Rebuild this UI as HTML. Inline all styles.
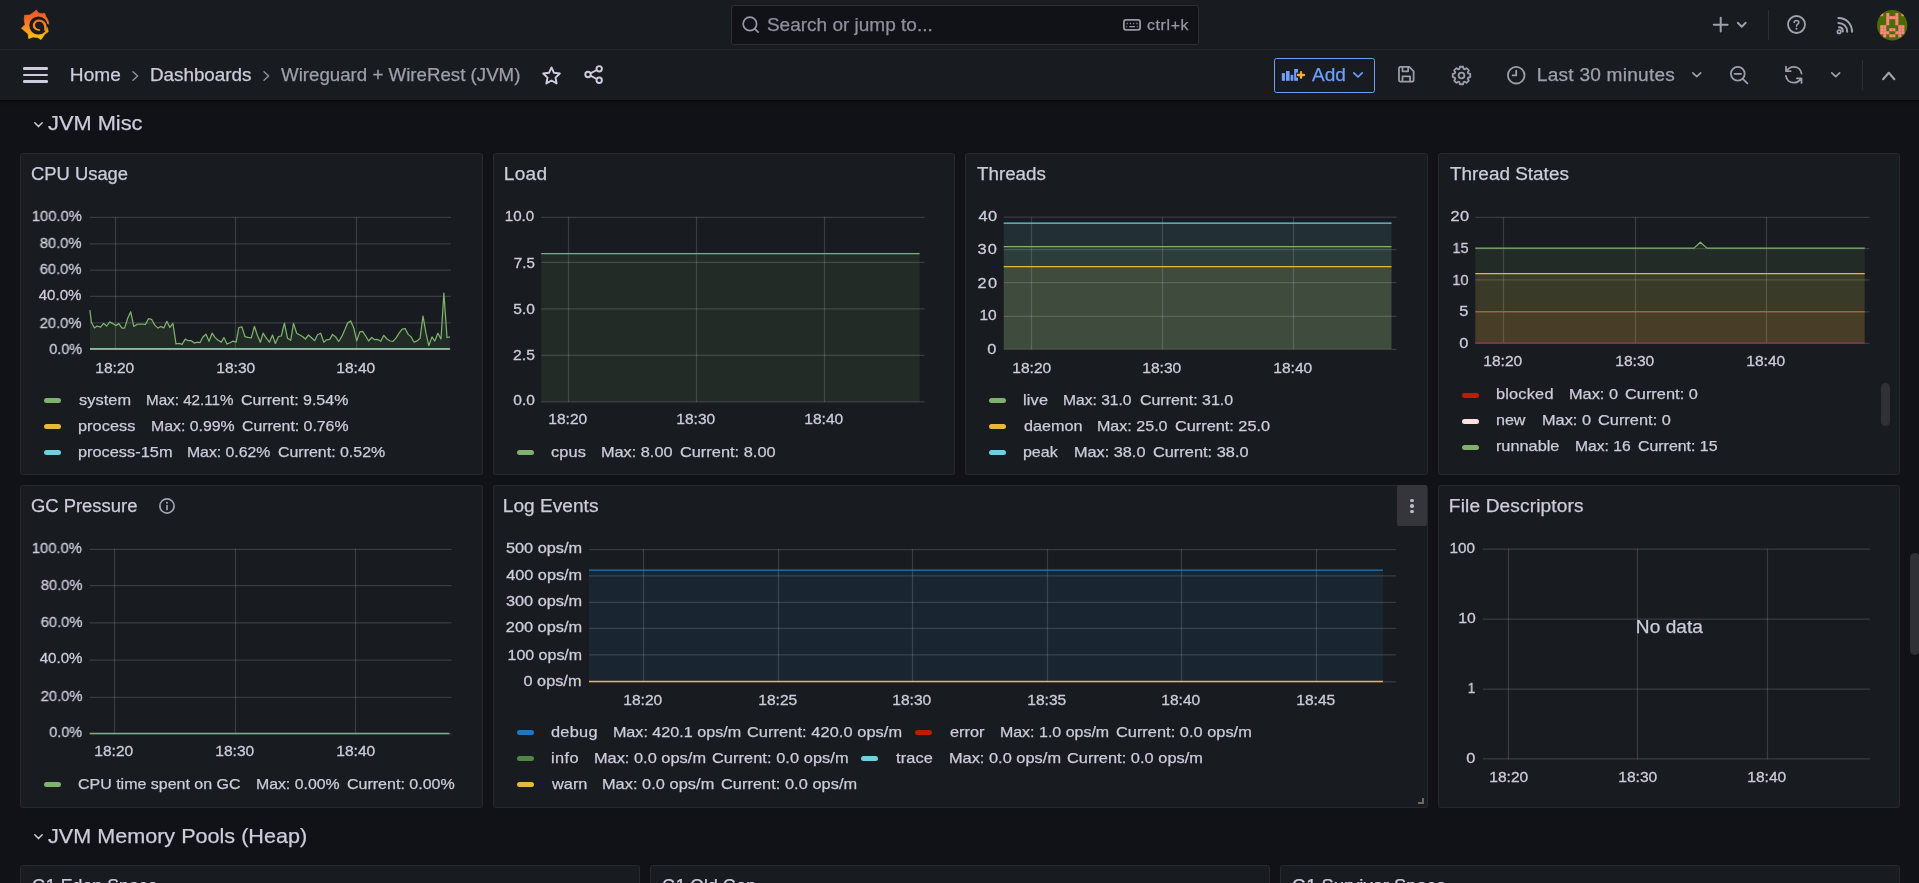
<!DOCTYPE html>
<html><head><meta charset="utf-8"><title>Wireguard + WireRest (JVM) - Dashboards - Grafana</title>
<style>
html,body{margin:0;padding:0;background:#111217;}
body{width:1919px;height:883px;overflow:hidden;position:relative;font-family:"Liberation Sans",sans-serif;}
.t{position:absolute;white-space:nowrap;font-family:"Liberation Sans",sans-serif;-webkit-text-stroke-width:0.25px;}
svg{overflow:visible}
</style></head><body>
<div style="position:absolute;left:0px;top:0px;width:1919px;height:49px;background:#181b1f;"></div>
<div style="position:absolute;left:0px;top:49px;width:1919px;height:1px;background:#25272c;"></div>
<div style="position:absolute;left:0px;top:50px;width:1919px;height:50px;background:#181b1f;"></div>
<div style="position:absolute;left:0px;top:100px;width:1919px;height:9px;background:linear-gradient(rgba(5,6,8,0.75),rgba(10,11,14,0.35) 30%,rgba(17,18,23,0));"></div>
<svg style="position:absolute;left:15px;top:5px;" width="40" height="40" viewBox="0 0 883 883"><defs><linearGradient id="gl" gradientUnits="userSpaceOnUse" x1="0" y1="105" x2="0" y2="772"><stop offset="0" stop-color="#f15a29"/><stop offset="0.3" stop-color="#f26a25"/><stop offset="0.62" stop-color="#f7941e"/><stop offset="1" stop-color="#fcca0b"/></linearGradient></defs>
<path fill="url(#gl)" stroke="url(#gl)" stroke-width="14" stroke-linejoin="round" d="M470 112 L520 176 L600 194 L655 180 L686 264 C726 312 746 370 744 428 L712 482 L736 588 L666 636 L574 764 L500 718 L400 708 L302 740 L290 638 L142 515 L222 430 L204 330 L211 228 L330 220 L420 156 Z"/>
<circle cx="516" cy="452" r="200" fill="#181b1f"/>
<path d="M703 408 L762 440 L722 490 L696 476 Z" fill="#181b1f"/>
<path fill="url(#gl)" d="M552 566 C470 582 396 530 393 460 C391 380 455 322 527 322 C622 322 694 392 698 474 L706 566 L648 566 C652 500 640 440 612 404 C588 374 552 368 522 368 C472 368 440 410 443 455 C446 500 492 540 550 538 Z"/></svg>
<div style="position:absolute;left:22.5px;top:67.4px;width:25px;height:2.6px;background:#ccccdc;border-radius:1.3px;"></div>
<div style="position:absolute;left:22.5px;top:73.7px;width:25px;height:2.6px;background:#ccccdc;border-radius:1.3px;"></div>
<div style="position:absolute;left:22.5px;top:80.0px;width:25px;height:2.6px;background:#ccccdc;border-radius:1.3px;"></div>
<div class="t" style="left:69.77px;top:65.00px;font-size:17.5px;line-height:20px;color:#ccccdc;letter-spacing:0.009px;transform:scaleX(1.0900);transform-origin:1.44px 50%;will-change:transform;">Home</div>
<div class="t" style="left:149.76px;top:65.00px;font-size:17.5px;line-height:20px;color:#ccccdc;letter-spacing:0.000px;transform:scaleX(1.0770);transform-origin:1.44px 50%;will-change:transform;">Dashboards</div>
<div class="t" style="left:281.33px;top:65.00px;font-size:17.5px;line-height:20px;color:#9d9eab;letter-spacing:0.000px;transform:scaleX(1.0682);transform-origin:0.07px 50%;will-change:transform;">Wireguard + WireRest (JVM)</div>
<svg style="position:absolute;left:132px;top:71px;" width="7" height="10" viewBox="0 0 7 10"><path d="M1 0.7 L5.6 5 L1 9.3" fill="none" stroke="#8e8f9b" stroke-width="1.5" stroke-linecap="round" stroke-linejoin="round"/></svg>
<svg style="position:absolute;left:262.8px;top:71px;" width="7" height="10" viewBox="0 0 7 10"><path d="M1 0.7 L5.6 5 L1 9.3" fill="none" stroke="#8e8f9b" stroke-width="1.5" stroke-linecap="round" stroke-linejoin="round"/></svg>
<svg style="position:absolute;left:542px;top:65.6px;" width="19" height="19" viewBox="0 0 19 19"><path d="M9.5 1.4 L12 6.8 L17.8 7.5 L13.5 11.6 L14.6 17.4 L9.5 14.5 L4.4 17.4 L5.5 11.6 L1.2 7.5 L7 6.8 Z" fill="none" stroke="#ccccdc" stroke-width="1.95" stroke-linejoin="round"/></svg>
<svg style="position:absolute;left:583.9px;top:65.1px;" width="19.5" height="19" viewBox="0 0 19.5 19"><g fill="none" stroke="#ccccdc" stroke-width="1.95"><circle cx="15.2" cy="3.8" r="2.7"/><circle cx="4" cy="9.5" r="2.7"/><circle cx="15.2" cy="15.2" r="2.7"/><path d="M6.4 8.3 L12.8 5 M6.4 10.7 L12.8 14"/></g></svg>
<div style="position:absolute;left:731px;top:5px;width:466px;height:38px;background:#111217;border:1px solid #2c2e34;border-radius:3px;"></div>
<svg style="position:absolute;left:742.3px;top:16.2px;" width="18" height="18" viewBox="0 0 18 18"><g fill="none" stroke="#9798a6" stroke-width="1.7" stroke-linecap="round"><circle cx="7.9" cy="7.9" r="6.7"/><path d="M12.8 12.8 L16.1 16.1"/></g></svg>
<div class="t" style="left:767.11px;top:15.00px;font-size:17.5px;line-height:20px;color:#8e8f9c;letter-spacing:0.000px;transform:scaleX(1.0856);transform-origin:0.79px 50%;will-change:transform;">Search or jump to...</div>
<svg style="position:absolute;left:1122.8px;top:19px;" width="18.2" height="11.8" viewBox="0 0 18.2 11.8"><g fill="none" stroke="#9798a6"><rect x="0.9" y="0.9" width="16.2" height="9.9" rx="2" stroke-width="1.8"/><path d="M3.7 4.5h1.1M6.9 4.5h1.1M10.2 4.5h1.1M13.4 4.5h1.1M3.3 7.65h0.9M6.3 7.65h5.7M13.8 7.65h0.9" stroke-width="1.3"/></g></svg>
<div class="t" style="left:1146.69px;top:17.00px;font-size:14.5px;line-height:16px;color:#9798a6;letter-spacing:0.611px;transform:scaleX(1.0900);transform-origin:0.61px 50%;will-change:transform;">ctrl+k</div>
<svg style="position:absolute;left:1713px;top:17px;" width="15.4" height="15.4" viewBox="0 0 15.4 15.4"><path d="M7.7 0.8V14.6M0.8 7.7H14.6" stroke="#a1a2b0" stroke-width="2" stroke-linecap="round"/></svg>
<svg style="position:absolute;left:1737.3px;top:22px;" width="9.5" height="5.5" viewBox="0 0 9.5 5.5"><path d="M0.8 0.8 L4.75 4.7 L8.7 0.8" fill="none" stroke="#a1a2b0" stroke-width="1.9" stroke-linecap="round" stroke-linejoin="round"/></svg>
<div style="position:absolute;left:1768px;top:10px;width:1px;height:30px;background:#2c2e34;"></div>
<svg style="position:absolute;left:1787px;top:15px;" width="19" height="19" viewBox="0 0 19 19"><circle cx="9.5" cy="9.5" r="8.5" fill="none" stroke="#a1a2b0" stroke-width="1.8"/><path d="M7.2 7.5 C7.2 4.9 11.8 4.9 11.8 7.5 C11.8 9.2 9.5 9.3 9.5 11.1" fill="none" stroke="#a1a2b0" stroke-width="1.6" stroke-linecap="round"/><circle cx="9.5" cy="13.7" r="1" fill="#a1a2b0"/></svg>
<svg style="position:absolute;left:1836.4px;top:16.5px;" width="17" height="18" viewBox="0 0 17 18"><g fill="none" stroke="#a1a2b0" stroke-width="2" stroke-linecap="round"><path d="M2.4 1 C10.2 1 16 6.8 16 14.8"/><path d="M2.4 5.9 C7.6 5.9 11.2 9.6 11.2 14.8"/><path d="M3 10.3 C5.4 10.3 6.8 12.2 6.8 14.4"/><circle cx="3.1" cy="14.7" r="1.7" stroke-width="1.7"/></g></svg>
<svg style="position:absolute;left:1876.8px;top:9.8px;" width="30.4" height="30.4" viewBox="0 0 30.4 30.4"><defs><clipPath id="avc"><circle cx="15.2" cy="15.2" r="15.2"/></clipPath></defs><g clip-path="url(#avc)"><rect width="31" height="31" fill="#4b6a08"/><rect x="3.20" y="3.10" width="3.07" height="3.07" fill="#ff877d"/><rect x="9.24" y="3.10" width="3.07" height="3.07" fill="#ff877d"/><rect x="18.30" y="3.10" width="3.07" height="3.07" fill="#ff877d"/><rect x="24.34" y="3.10" width="3.07" height="3.07" fill="#ff877d"/><rect x="9.24" y="6.12" width="3.07" height="3.07" fill="#ff877d"/><rect x="12.26" y="6.12" width="3.07" height="3.07" fill="#ff877d"/><rect x="15.28" y="6.12" width="3.07" height="3.07" fill="#ff877d"/><rect x="18.30" y="6.12" width="3.07" height="3.07" fill="#ff877d"/><rect x="9.24" y="9.14" width="3.07" height="3.07" fill="#ff877d"/><rect x="18.30" y="9.14" width="3.07" height="3.07" fill="#ff877d"/><rect x="9.24" y="12.16" width="3.07" height="3.07" fill="#ff877d"/><rect x="18.30" y="12.16" width="3.07" height="3.07" fill="#ff877d"/><rect x="3.20" y="15.18" width="3.07" height="3.07" fill="#ff877d"/><rect x="6.22" y="15.18" width="3.07" height="3.07" fill="#ff877d"/><rect x="21.32" y="15.18" width="3.07" height="3.07" fill="#ff877d"/><rect x="24.34" y="15.18" width="3.07" height="3.07" fill="#ff877d"/><rect x="3.20" y="18.20" width="3.07" height="3.07" fill="#ff877d"/><rect x="6.22" y="18.20" width="3.07" height="3.07" fill="#ff877d"/><rect x="12.26" y="18.20" width="3.07" height="3.07" fill="#ff877d"/><rect x="15.28" y="18.20" width="3.07" height="3.07" fill="#ff877d"/><rect x="21.32" y="18.20" width="3.07" height="3.07" fill="#ff877d"/><rect x="24.34" y="18.20" width="3.07" height="3.07" fill="#ff877d"/><rect x="3.20" y="21.22" width="3.07" height="3.07" fill="#ff877d"/><rect x="6.22" y="21.22" width="3.07" height="3.07" fill="#ff877d"/><rect x="9.24" y="21.22" width="3.07" height="3.07" fill="#ff877d"/><rect x="18.30" y="21.22" width="3.07" height="3.07" fill="#ff877d"/><rect x="21.32" y="21.22" width="3.07" height="3.07" fill="#ff877d"/><rect x="24.34" y="21.22" width="3.07" height="3.07" fill="#ff877d"/><rect x="6.22" y="24.24" width="3.07" height="3.07" fill="#ff877d"/><rect x="12.26" y="24.24" width="3.07" height="3.07" fill="#ff877d"/><rect x="15.28" y="24.24" width="3.07" height="3.07" fill="#ff877d"/><rect x="21.32" y="24.24" width="3.07" height="3.07" fill="#ff877d"/></g></svg>
<div style="position:absolute;left:1274px;top:57.9px;width:98.7px;height:32.7px;border:1.25px solid #6e9fff;border-radius:2.5px;"></div>
<svg style="position:absolute;left:0;top:0" width="1919" height="883" viewBox="0 0 1919 883"><defs><linearGradient id="pg" x1="0" y1="0" x2="0" y2="1"><stop offset="0" stop-color="#ff9830"/><stop offset="1" stop-color="#fbc230"/></linearGradient></defs><g fill="#6e9fff"><rect x="1281.8" y="73.1" width="3.2" height="7.7"/><rect x="1286" y="71" width="3.6" height="9.8"/><rect x="1290.6" y="74.8" width="2.7" height="6"/><rect x="1294.2" y="69" width="3.8" height="11.8"/></g><rect x="1296.2" y="72.6" width="3" height="5" fill="#181b1f"/><path d="M1301 72.2V77.7M1297.9 75H1304" stroke="url(#pg)" stroke-width="2.3" stroke-linecap="round"/></svg>
<div class="t" style="left:1312.37px;top:65.00px;font-size:17.5px;line-height:20px;color:#6e9fff;letter-spacing:0.011px;transform:scaleX(1.0900);transform-origin:0.04px 50%;will-change:transform;">Add</div>
<svg style="position:absolute;left:1352.6px;top:71.8px;" width="10" height="5.8" viewBox="0 0 10 5.8"><path d="M0.8 0.8 L5.0 5.0 L9.2 0.8" fill="none" stroke="#6e9fff" stroke-width="1.7" stroke-linecap="round" stroke-linejoin="round"/></svg>
<svg style="position:absolute;left:1398.4px;top:66.1px;" width="16.6" height="16.6" viewBox="0 0 17 17"><g fill="none" stroke="#9d9eab" stroke-width="1.8" stroke-linejoin="round"><path d="M1 2.4 C1 1.6 1.6 1 2.4 1 H11.6 L16 5.4 V14.6 C16 15.4 15.4 16 14.6 16 H2.4 C1.6 16 1 15.4 1 14.6 Z"/><path d="M4.6 1 V5.4 H10.4 V1"/><path d="M4.6 16 V10.6 H12.4 V16"/></g></svg>
<svg style="position:absolute;left:1452px;top:65.5px;" width="19" height="19" viewBox="0 0 19 19"><path d="M7.91 0.74 L11.09 0.74 L11.57 2.81 L12.77 3.31 L14.56 2.18 L16.82 4.44 L15.69 6.23 L16.19 7.43 L18.26 7.91 L18.26 11.09 L16.19 11.57 L15.69 12.77 L16.82 14.56 L14.56 16.82 L12.77 15.69 L11.57 16.19 L11.09 18.26 L7.91 18.26 L7.43 16.19 L6.23 15.69 L4.44 16.82 L2.18 14.56 L3.31 12.77 L2.81 11.57 L0.74 11.09 L0.74 7.91 L2.81 7.43 L3.31 6.23 L2.18 4.44 L4.44 2.18 L6.23 3.31 L7.43 2.81 Z" fill="none" stroke="#9d9eab" stroke-width="1.8" stroke-linejoin="round"/><circle cx="9.5" cy="9.5" r="2.9" fill="none" stroke="#9d9eab" stroke-width="1.8"/></svg>
<svg style="position:absolute;left:1506.8px;top:66px;" width="18.4" height="18.4" viewBox="0 0 18.4 18.4"><circle cx="9.2" cy="9.2" r="8.3" fill="none" stroke="#9d9eab" stroke-width="1.8"/><path d="M9.2 4.6V9.4H5.6" fill="none" stroke="#9d9eab" stroke-width="1.8" stroke-linecap="round" stroke-linejoin="round"/></svg>
<div class="t" style="left:1536.87px;top:65.00px;font-size:17.5px;line-height:20px;color:#9fa0ae;letter-spacing:0.215px;transform:scaleX(1.0900);transform-origin:1.44px 50%;will-change:transform;">Last 30 minutes</div>
<svg style="position:absolute;left:1692.4px;top:71.9px;" width="9.5" height="5.5" viewBox="0 0 9.5 5.5"><path d="M0.8 0.8 L4.75 4.7 L8.7 0.8" fill="none" stroke="#9d9eab" stroke-width="1.7" stroke-linecap="round" stroke-linejoin="round"/></svg>
<svg style="position:absolute;left:1730px;top:66px;" width="18.5" height="18.5" viewBox="0 0 18.5 18.5"><g fill="none" stroke="#9d9eab" stroke-width="1.8" stroke-linecap="round"><circle cx="7.8" cy="7.8" r="6.9"/><path d="M12.8 12.8 L17.4 17.4 M4.6 7.8H11"/></g></svg>
<svg style="position:absolute;left:1784px;top:65px;" width="19.5" height="19.5" viewBox="0 0 19.5 19.5"><g fill="none" stroke="#9d9eab" stroke-width="1.8" stroke-linecap="round" stroke-linejoin="round"><path d="M17.6 8.6 C17 4.6 13.8 1.8 9.8 1.8 C6.6 1.8 4 3.4 2.6 6 M2 1.6 V6.2 H6.6"/><path d="M1.9 10.9 C2.5 14.9 5.7 17.7 9.7 17.7 C12.9 17.7 15.5 16.1 16.9 13.5 M17.5 17.9 V13.3 H12.9"/></g></svg>
<svg style="position:absolute;left:1831.0px;top:71.9px;" width="9.5" height="5.5" viewBox="0 0 9.5 5.5"><path d="M0.8 0.8 L4.75 4.7 L8.7 0.8" fill="none" stroke="#9d9eab" stroke-width="1.7" stroke-linecap="round" stroke-linejoin="round"/></svg>
<div style="position:absolute;left:1862px;top:60px;width:1px;height:30px;background:#2c2e34;"></div>
<svg style="position:absolute;left:1882.0px;top:70.7px;" width="13.5" height="9.5" viewBox="0 0 13.5 9.5"><path d="M1.1 8.2 L6.75 1.8 L12.4 8.2" fill="none" stroke="#a2a3b0" stroke-width="2.1" stroke-linecap="round" stroke-linejoin="round"/></svg>
<svg style="position:absolute;left:33.6px;top:122.2px;" width="9" height="5.4" viewBox="0 0 9 5.4"><path d="M0.8 0.8 L4.5 4.6000000000000005 L8.2 0.8" fill="none" stroke="#ccccdc" stroke-width="1.5" stroke-linecap="round" stroke-linejoin="round"/></svg>
<div class="t" style="left:47.98px;top:111.00px;font-size:21px;line-height:23px;color:#ccccdc;letter-spacing:0.000px;transform:scaleX(1.0385);transform-origin:0.32px 50%;">JVM Misc</div>
<svg style="position:absolute;left:33.8px;top:834.4px;" width="9" height="5.4" viewBox="0 0 9 5.4"><path d="M0.8 0.8 L4.5 4.6000000000000005 L8.2 0.8" fill="none" stroke="#ccccdc" stroke-width="1.5" stroke-linecap="round" stroke-linejoin="round"/></svg>
<div class="t" style="left:48.19px;top:824.00px;font-size:21px;line-height:23px;color:#ccccdc;letter-spacing:0.000px;transform:scaleX(1.0282);transform-origin:0.32px 50%;">JVM Memory Pools (Heap)</div>
<div style="position:absolute;left:20px;top:153px;width:461px;height:320px;background:#181b1f;border:1px solid #26282e;border-radius:2.5px;"></div>
<div class="t" style="left:31.12px;top:164.00px;font-size:17.5px;line-height:20px;color:#ccccdc;letter-spacing:0.000px;transform:scaleX(1.0512);transform-origin:0.88px 50%;">CPU Usage</div>
<div style="position:absolute;left:493px;top:153px;width:460px;height:320px;background:#181b1f;border:1px solid #26282e;border-radius:2.5px;"></div>
<div class="t" style="left:503.76px;top:164.00px;font-size:17.5px;line-height:20px;color:#ccccdc;letter-spacing:0.233px;transform:scaleX(1.0900);transform-origin:1.44px 50%;">Load</div>
<div style="position:absolute;left:965px;top:153px;width:461px;height:320px;background:#181b1f;border:1px solid #26282e;border-radius:2.5px;"></div>
<div class="t" style="left:976.91px;top:164.00px;font-size:17.5px;line-height:20px;color:#ccccdc;letter-spacing:0.000px;transform:scaleX(1.0732);transform-origin:0.39px 50%;">Threads</div>
<div style="position:absolute;left:1438px;top:153px;width:460px;height:320px;background:#181b1f;border:1px solid #26282e;border-radius:2.5px;"></div>
<div class="t" style="left:1449.62px;top:164.00px;font-size:17.5px;line-height:20px;color:#ccccdc;letter-spacing:0.000px;transform:scaleX(1.0817);transform-origin:0.39px 50%;">Thread States</div>
<div style="position:absolute;left:20px;top:485px;width:461px;height:321px;background:#181b1f;border:1px solid #26282e;border-radius:2.5px;"></div>
<div class="t" style="left:31.23px;top:496.00px;font-size:17.5px;line-height:20px;color:#ccccdc;letter-spacing:-0.000px;transform:scaleX(1.0524);transform-origin:0.88px 50%;">GC Pressure</div>
<div style="position:absolute;left:493px;top:485px;width:933px;height:321px;background:#181b1f;border:1px solid #26282e;border-radius:2.5px;"></div>
<div class="t" style="left:503.46px;top:496.00px;font-size:17.5px;line-height:20px;color:#ccccdc;letter-spacing:0.012px;transform:scaleX(1.0900);transform-origin:1.44px 50%;">Log Events</div>
<div style="position:absolute;left:1438px;top:485px;width:460px;height:321px;background:#181b1f;border:1px solid #26282e;border-radius:2.5px;"></div>
<div class="t" style="left:1448.57px;top:496.00px;font-size:17.5px;line-height:20px;color:#ccccdc;letter-spacing:0.138px;transform:scaleX(1.0900);transform-origin:1.44px 50%;">File Descriptors</div>
<div style="position:absolute;left:20px;top:865px;width:618px;height:38px;background:#181b1f;border:1px solid #26282e;border-radius:2.5px;"></div>
<div class="t" style="left:31.62px;top:876.00px;font-size:17.5px;line-height:20px;color:#ccccdc;letter-spacing:0.000px;transform:scaleX(1.0172);transform-origin:0.88px 50%;">G1 Eden Space</div>
<div style="position:absolute;left:650px;top:865px;width:618px;height:38px;background:#181b1f;border:1px solid #26282e;border-radius:2.5px;"></div>
<div class="t" style="left:661.52px;top:876.00px;font-size:17.5px;line-height:20px;color:#ccccdc;letter-spacing:0.000px;transform:scaleX(1.0056);transform-origin:0.88px 50%;">G1 Old Gen</div>
<div style="position:absolute;left:1280px;top:865px;width:618px;height:38px;background:#181b1f;border:1px solid #26282e;border-radius:2.5px;"></div>
<div class="t" style="left:1291.62px;top:876.00px;font-size:17.5px;line-height:20px;color:#ccccdc;letter-spacing:0.000px;transform:scaleX(1.0502);transform-origin:0.88px 50%;">G1 Survivor Space</div>
<svg style="position:absolute;left:0;top:0" width="1919" height="883" viewBox="0 0 1919 883"><g stroke="#f0faff" stroke-opacity="0.15" stroke-width="1.25"><line x1="90" x2="451" y1="217.45" y2="217.45"/><line x1="90" x2="451" y1="243.75" y2="243.75"/><line x1="90" x2="451" y1="270.05" y2="270.05"/><line x1="90" x2="451" y1="296.35" y2="296.35"/><line x1="90" x2="451" y1="322.75" y2="322.75"/><line x1="90" x2="451" y1="349.05" y2="349.05"/><line x1="115.5" x2="115.5" y1="216.90" y2="349.50"/><line x1="235.5" x2="235.5" y1="216.90" y2="349.50"/><line x1="356.5" x2="356.5" y1="216.90" y2="349.50"/></g><path d="M89.9 310.1 L91.4 322.3 L94.4 327.9 L97.1 326.0 L100.5 327.2 L103.6 323.4 L106.7 326.0 L109.7 321.9 L112.8 323.6 L115.8 325.6 L118.9 323.6 L122.0 328.1 L124.6 328.1 L127.7 318.3 L130.7 311.7 L133.8 326.4 L136.8 324.4 L140.3 324.0 L145.4 324.4 L148.5 318.7 L151.5 319.3 L155.0 325.4 L158.1 328.1 L160.7 326.4 L163.8 327.9 L166.8 321.3 L169.9 327.4 L172.9 323.4 L176.0 343.8 L179.1 343.4 L182.1 344.4 L185.2 339.1 L188.2 340.7 L191.3 340.7 L194.3 343.1 L197.4 342.1 L199.9 342.7 L202.9 337.0 L206.0 334.2 L209.0 341.3 L212.1 333.2 L215.1 337.6 L218.2 340.3 L221.3 342.1 L223.9 337.6 L227.0 344.0 L230.0 342.7 L233.1 341.1 L236.2 342.1 L238.8 327.5 L241.9 326.9 L245.0 336.7 L248.1 337.3 L251.3 337.8 L254.4 326.3 L257.3 335.0 L260.3 342.2 L263.1 333.2 L266.3 338.2 L269.4 342.2 L272.5 335.0 L275.4 343.5 L278.5 336.5 L281.3 336.0 L284.4 323.1 L287.5 338.2 L290.7 340.3 L293.5 323.4 L296.7 333.2 L299.8 335.0 L302.5 336.5 L305.4 339.0 L308.5 335.0 L311.5 337.8 L314.7 340.7 L317.5 334.7 L320.7 333.2 L323.8 342.2 L326.5 339.8 L329.7 339.4 L332.6 334.4 L335.7 336.9 L338.6 341.5 L341.6 336.9 L344.7 330.0 L347.6 322.9 L350.7 321.0 L353.8 328.1 L356.7 340.9 L359.8 331.9 L362.6 331.3 L365.7 336.0 L368.6 341.0 L371.7 337.5 L374.7 339.7 L377.8 339.4 L380.7 341.3 L383.8 335.4 L387.0 339.0 L390.1 341.0 L393.0 341.3 L396.1 337.8 L399.1 333.2 L402.2 329.1 L405.1 328.5 L408.2 334.4 L411.1 336.9 L414.1 342.2 L417.2 340.9 L420.1 338.2 L423.0 316.0 L426.0 333.2 L428.8 345.7 L432.0 336.9 L434.7 341.0 L437.9 333.2 L441.0 339.0 L443.9 293.1 L447.0 337.5 L449.9 336.9 L449.9 348.9 L89.9 348.9 Z" fill="#7eb26d" fill-opacity="0.115"/><path d="M89.9 310.1 L91.4 322.3 L94.4 327.9 L97.1 326.0 L100.5 327.2 L103.6 323.4 L106.7 326.0 L109.7 321.9 L112.8 323.6 L115.8 325.6 L118.9 323.6 L122.0 328.1 L124.6 328.1 L127.7 318.3 L130.7 311.7 L133.8 326.4 L136.8 324.4 L140.3 324.0 L145.4 324.4 L148.5 318.7 L151.5 319.3 L155.0 325.4 L158.1 328.1 L160.7 326.4 L163.8 327.9 L166.8 321.3 L169.9 327.4 L172.9 323.4 L176.0 343.8 L179.1 343.4 L182.1 344.4 L185.2 339.1 L188.2 340.7 L191.3 340.7 L194.3 343.1 L197.4 342.1 L199.9 342.7 L202.9 337.0 L206.0 334.2 L209.0 341.3 L212.1 333.2 L215.1 337.6 L218.2 340.3 L221.3 342.1 L223.9 337.6 L227.0 344.0 L230.0 342.7 L233.1 341.1 L236.2 342.1 L238.8 327.5 L241.9 326.9 L245.0 336.7 L248.1 337.3 L251.3 337.8 L254.4 326.3 L257.3 335.0 L260.3 342.2 L263.1 333.2 L266.3 338.2 L269.4 342.2 L272.5 335.0 L275.4 343.5 L278.5 336.5 L281.3 336.0 L284.4 323.1 L287.5 338.2 L290.7 340.3 L293.5 323.4 L296.7 333.2 L299.8 335.0 L302.5 336.5 L305.4 339.0 L308.5 335.0 L311.5 337.8 L314.7 340.7 L317.5 334.7 L320.7 333.2 L323.8 342.2 L326.5 339.8 L329.7 339.4 L332.6 334.4 L335.7 336.9 L338.6 341.5 L341.6 336.9 L344.7 330.0 L347.6 322.9 L350.7 321.0 L353.8 328.1 L356.7 340.9 L359.8 331.9 L362.6 331.3 L365.7 336.0 L368.6 341.0 L371.7 337.5 L374.7 339.7 L377.8 339.4 L380.7 341.3 L383.8 335.4 L387.0 339.0 L390.1 341.0 L393.0 341.3 L396.1 337.8 L399.1 333.2 L402.2 329.1 L405.1 328.5 L408.2 334.4 L411.1 336.9 L414.1 342.2 L417.2 340.9 L420.1 338.2 L423.0 316.0 L426.0 333.2 L428.8 345.7 L432.0 336.9 L434.7 341.0 L437.9 333.2 L441.0 339.0 L443.9 293.1 L447.0 337.5 L449.9 336.9" fill="none" stroke="#7eb26d" stroke-width="1.25" stroke-linejoin="round"/><path d="M90 348.9 H449.8" stroke="#eab839" stroke-width="1.3"/><path d="M90 349 H449.8" stroke="#6ed0e0" stroke-opacity="0.8" stroke-width="1.4"/></svg>
<div class="t" style="left:31.06px;top:207.00px;font-size:15px;line-height:17px;color:#ccccdc;letter-spacing:0.000px;will-change:transform;-webkit-text-stroke-width:0.3px;transform:scaleX(0.9837);transform-origin:50.34px 50%;">100.0%</div>
<div class="t" style="left:39.40px;top:234.00px;font-size:15px;line-height:17px;color:#ccccdc;letter-spacing:0.000px;will-change:transform;-webkit-text-stroke-width:0.3px;transform:scaleX(0.9817);transform-origin:42.00px 50%;">80.0%</div>
<div class="t" style="left:39.40px;top:260.00px;font-size:15px;line-height:17px;color:#ccccdc;letter-spacing:0.000px;will-change:transform;-webkit-text-stroke-width:0.3px;transform:scaleX(0.9842);transform-origin:42.00px 50%;">60.0%</div>
<div class="t" style="left:39.40px;top:286.00px;font-size:15px;line-height:17px;color:#ccccdc;letter-spacing:0.000px;will-change:transform;-webkit-text-stroke-width:0.3px;transform:scaleX(1.0079);transform-origin:42.00px 50%;">40.0%</div>
<div class="t" style="left:39.40px;top:314.00px;font-size:15px;line-height:17px;color:#ccccdc;letter-spacing:0.000px;will-change:transform;-webkit-text-stroke-width:0.3px;transform:scaleX(0.9842);transform-origin:42.00px 50%;">20.0%</div>
<div class="t" style="left:47.74px;top:340.00px;font-size:15px;line-height:17px;color:#ccccdc;letter-spacing:0.000px;will-change:transform;-webkit-text-stroke-width:0.3px;transform:scaleX(0.9615);transform-origin:33.66px 50%;">0.0%</div>
<div class="t" style="left:96.35px;top:359.00px;font-size:15px;line-height:17px;color:#ccccdc;letter-spacing:0.000px;will-change:transform;-webkit-text-stroke-width:0.3px;transform:scaleX(1.0385);transform-origin:19.05px 50%;">18:20</div>
<div class="t" style="left:216.65px;top:359.00px;font-size:15px;line-height:17px;color:#ccccdc;letter-spacing:0.000px;will-change:transform;-webkit-text-stroke-width:0.3px;transform:scaleX(1.0385);transform-origin:19.05px 50%;">18:30</div>
<div class="t" style="left:336.95px;top:359.00px;font-size:15px;line-height:17px;color:#ccccdc;letter-spacing:0.000px;will-change:transform;-webkit-text-stroke-width:0.3px;transform:scaleX(1.0385);transform-origin:19.05px 50%;">18:40</div>
<div style="position:absolute;left:44px;top:398px;width:17.3px;height:5px;background:#7eb26d;border-radius:2.5px;"></div>
<div class="t" style="left:78.80px;top:391.00px;font-size:15px;line-height:17px;color:#ccccdc;letter-spacing:0.078px;transform:scaleX(1.0900);transform-origin:0.41px 50%;">system</div>
<div class="t" style="left:146.07px;top:391.00px;font-size:15px;line-height:17px;color:#ccccdc;letter-spacing:0.000px;transform:scaleX(1.0133);transform-origin:1.23px 50%;">Max: 42.11%</div>
<div class="t" style="left:241.35px;top:391.00px;font-size:15px;line-height:17px;color:#ccccdc;letter-spacing:-0.000px;transform:scaleX(1.0643);transform-origin:0.75px 50%;">Current: 9.54%</div>
<div style="position:absolute;left:44px;top:424px;width:17.3px;height:5px;background:#eab839;border-radius:2.5px;"></div>
<div class="t" style="left:78.24px;top:417.00px;font-size:15px;line-height:17px;color:#ccccdc;letter-spacing:0.045px;transform:scaleX(1.0900);transform-origin:0.96px 50%;">process</div>
<div class="t" style="left:150.87px;top:417.00px;font-size:15px;line-height:17px;color:#ccccdc;letter-spacing:0.000px;transform:scaleX(1.0575);transform-origin:1.23px 50%;">Max: 0.99%</div>
<div class="t" style="left:242.35px;top:417.00px;font-size:15px;line-height:17px;color:#ccccdc;letter-spacing:0.000px;transform:scaleX(1.0562);transform-origin:0.75px 50%;">Current: 0.76%</div>
<div style="position:absolute;left:44px;top:450px;width:17.3px;height:5px;background:#6ed0e0;border-radius:2.5px;"></div>
<div class="t" style="left:78.24px;top:443.00px;font-size:15px;line-height:17px;color:#ccccdc;letter-spacing:0.010px;transform:scaleX(1.0900);transform-origin:0.96px 50%;">process-15m</div>
<div class="t" style="left:187.47px;top:443.00px;font-size:15px;line-height:17px;color:#ccccdc;letter-spacing:0.000px;transform:scaleX(1.0537);transform-origin:1.23px 50%;">Max: 0.62%</div>
<div class="t" style="left:278.35px;top:443.00px;font-size:15px;line-height:17px;color:#ccccdc;letter-spacing:0.000px;transform:scaleX(1.0633);transform-origin:0.75px 50%;">Current: 0.52%</div>
<svg style="position:absolute;left:0;top:0" width="1919" height="883" viewBox="0 0 1919 883"><rect x="541.2" y="253.7" width="378.4" height="148" fill="#7eb26d" fill-opacity="0.115"/><g stroke="#f0faff" stroke-opacity="0.15" stroke-width="1.25"><line x1="541.2" x2="924.6" y1="217.25" y2="217.25"/><line x1="541.2" x2="924.6" y1="262.45" y2="262.45"/><line x1="541.2" x2="924.6" y1="308.85" y2="308.85"/><line x1="541.2" x2="924.6" y1="355.35" y2="355.35"/><line x1="541.2" x2="924.6" y1="401.75" y2="401.75"/><line x1="568.5" x2="568.5" y1="216.60" y2="402.30"/><line x1="696.5" x2="696.5" y1="216.60" y2="402.30"/><line x1="824.5" x2="824.5" y1="216.60" y2="402.30"/></g><path d="M541.2 253.7 H919.6" stroke="#7eb26d" stroke-width="1.25"/></svg>
<div class="t" style="left:505.38px;top:207.00px;font-size:15px;line-height:17px;color:#ccccdc;letter-spacing:0.000px;will-change:transform;-webkit-text-stroke-width:0.3px;transform:scaleX(1.0080);transform-origin:28.62px 50%;">10.0</div>
<div class="t" style="left:513.76px;top:254.00px;font-size:15px;line-height:17px;color:#ccccdc;letter-spacing:0.000px;will-change:transform;-webkit-text-stroke-width:0.3px;transform:scaleX(1.0067);transform-origin:20.23px 50%;">7.5</div>
<div class="t" style="left:513.72px;top:300.00px;font-size:15px;line-height:17px;color:#ccccdc;letter-spacing:0.000px;will-change:transform;-webkit-text-stroke-width:0.3px;transform:scaleX(1.0366);transform-origin:20.28px 50%;">5.0</div>
<div class="t" style="left:513.76px;top:346.00px;font-size:15px;line-height:17px;color:#ccccdc;letter-spacing:0.000px;will-change:transform;-webkit-text-stroke-width:0.3px;transform:scaleX(1.0470);transform-origin:20.23px 50%;">2.5</div>
<div class="t" style="left:513.72px;top:391.00px;font-size:15px;line-height:17px;color:#ccccdc;letter-spacing:0.000px;will-change:transform;-webkit-text-stroke-width:0.3px;transform:scaleX(1.0358);transform-origin:20.28px 50%;">0.0</div>
<div class="t" style="left:549.35px;top:410.00px;font-size:15px;line-height:17px;color:#ccccdc;letter-spacing:0.000px;will-change:transform;-webkit-text-stroke-width:0.3px;transform:scaleX(1.0385);transform-origin:19.05px 50%;">18:20</div>
<div class="t" style="left:677.15px;top:410.00px;font-size:15px;line-height:17px;color:#ccccdc;letter-spacing:0.000px;will-change:transform;-webkit-text-stroke-width:0.3px;transform:scaleX(1.0385);transform-origin:19.05px 50%;">18:30</div>
<div class="t" style="left:805.05px;top:410.00px;font-size:15px;line-height:17px;color:#ccccdc;letter-spacing:0.000px;will-change:transform;-webkit-text-stroke-width:0.3px;transform:scaleX(1.0385);transform-origin:19.05px 50%;">18:40</div>
<div style="position:absolute;left:517px;top:450px;width:17.3px;height:5px;background:#7eb26d;border-radius:2.5px;"></div>
<div class="t" style="left:551.37px;top:443.00px;font-size:15px;line-height:17px;color:#ccccdc;letter-spacing:0.105px;transform:scaleX(1.0900);transform-origin:0.63px 50%;">cpus</div>
<div class="t" style="left:601.27px;top:443.00px;font-size:15px;line-height:17px;color:#ccccdc;letter-spacing:0.000px;transform:scaleX(1.0880);transform-origin:1.23px 50%;">Max: 8.00</div>
<div class="t" style="left:680.05px;top:443.00px;font-size:15px;line-height:17px;color:#ccccdc;letter-spacing:0.017px;transform:scaleX(1.0900);transform-origin:0.75px 50%;">Current: 8.00</div>
<svg style="position:absolute;left:0;top:0" width="1919" height="883" viewBox="0 0 1919 883"><rect x="1003.7" y="246.7" width="387.79999999999995" height="102.5" fill="#7eb26d" fill-opacity="0.115"/><rect x="1003.7" y="266.5" width="387.79999999999995" height="82.69999999999999" fill="#eab839" fill-opacity="0.115"/><rect x="1003.7" y="223.2" width="387.79999999999995" height="126.0" fill="#6ed0e0" fill-opacity="0.115"/><g stroke="#f0faff" stroke-opacity="0.15" stroke-width="1.25"><line x1="1003.7" x2="1396.5" y1="217.20" y2="217.20"/><line x1="1003.7" x2="1396.5" y1="249.70" y2="249.70"/><line x1="1003.7" x2="1396.5" y1="282.65" y2="282.65"/><line x1="1003.7" x2="1396.5" y1="316.40" y2="316.40"/><line x1="1003.7" x2="1396.5" y1="349.45" y2="349.45"/><line x1="1031.5" x2="1031.5" y1="216.90" y2="349.80"/><line x1="1162.5" x2="1162.5" y1="216.90" y2="349.80"/><line x1="1293.5" x2="1293.5" y1="216.90" y2="349.80"/></g><path d="M1003.7 246.7 H1391.5" stroke="#7eb26d" stroke-width="1.25"/><path d="M1003.7 266.5 H1391.5" stroke="#eab839" stroke-width="1.25"/><path d="M1003.7 223.2 H1391.5" stroke="#6ed0e0" stroke-width="1.25"/></svg>
<div class="t" style="left:979.63px;top:207.00px;font-size:15px;line-height:17px;color:#ccccdc;letter-spacing:0.459px;will-change:transform;-webkit-text-stroke-width:0.3px;transform:scaleX(1.0900);transform-origin:16.57px 50%;">40</div>
<div class="t" style="left:978.93px;top:240.00px;font-size:15px;line-height:17px;color:#ccccdc;letter-spacing:1.157px;will-change:transform;-webkit-text-stroke-width:0.3px;transform:scaleX(1.0900);transform-origin:17.27px 50%;">30</div>
<div class="t" style="left:978.75px;top:274.00px;font-size:15px;line-height:17px;color:#ccccdc;letter-spacing:1.337px;will-change:transform;-webkit-text-stroke-width:0.3px;transform:scaleX(1.0900);transform-origin:17.45px 50%;">20</div>
<div class="t" style="left:980.09px;top:306.00px;font-size:15px;line-height:17px;color:#ccccdc;letter-spacing:0.000px;will-change:transform;-webkit-text-stroke-width:0.3px;transform:scaleX(1.0354);transform-origin:16.11px 50%;">10</div>
<div class="t" style="left:988.43px;top:340.00px;font-size:15px;line-height:17px;color:#ccccdc;letter-spacing:0.000px;will-change:transform;-webkit-text-stroke-width:0.3px;transform:scaleX(1.0900);transform-origin:7.77px 50%;">0</div>
<div class="t" style="left:1012.55px;top:359.00px;font-size:15px;line-height:17px;color:#ccccdc;letter-spacing:0.000px;will-change:transform;-webkit-text-stroke-width:0.3px;transform:scaleX(1.0385);transform-origin:19.05px 50%;">18:20</div>
<div class="t" style="left:1143.35px;top:359.00px;font-size:15px;line-height:17px;color:#ccccdc;letter-spacing:0.000px;will-change:transform;-webkit-text-stroke-width:0.3px;transform:scaleX(1.0385);transform-origin:19.05px 50%;">18:30</div>
<div class="t" style="left:1274.35px;top:359.00px;font-size:15px;line-height:17px;color:#ccccdc;letter-spacing:0.000px;will-change:transform;-webkit-text-stroke-width:0.3px;transform:scaleX(1.0385);transform-origin:19.05px 50%;">18:40</div>
<div style="position:absolute;left:989px;top:398px;width:17.3px;height:5px;background:#7eb26d;border-radius:2.5px;"></div>
<div class="t" style="left:1023.20px;top:391.00px;font-size:15px;line-height:17px;color:#ccccdc;letter-spacing:0.180px;transform:scaleX(1.0900);transform-origin:1.00px 50%;">live</div>
<div class="t" style="left:1063.47px;top:391.00px;font-size:15px;line-height:17px;color:#ccccdc;letter-spacing:0.000px;transform:scaleX(1.0411);transform-origin:1.23px 50%;">Max: 31.0</div>
<div class="t" style="left:1139.55px;top:391.00px;font-size:15px;line-height:17px;color:#ccccdc;letter-spacing:0.000px;transform:scaleX(1.0636);transform-origin:0.75px 50%;">Current: 31.0</div>
<div style="position:absolute;left:989px;top:424px;width:17.3px;height:5px;background:#eab839;border-radius:2.5px;"></div>
<div class="t" style="left:1023.57px;top:417.00px;font-size:15px;line-height:17px;color:#ccccdc;letter-spacing:0.000px;transform:scaleX(1.0794);transform-origin:0.63px 50%;">daemon</div>
<div class="t" style="left:1097.17px;top:417.00px;font-size:15px;line-height:17px;color:#ccccdc;letter-spacing:0.000px;transform:scaleX(1.0723);transform-origin:1.23px 50%;">Max: 25.0</div>
<div class="t" style="left:1175.15px;top:417.00px;font-size:15px;line-height:17px;color:#ccccdc;letter-spacing:0.000px;transform:scaleX(1.0868);transform-origin:0.75px 50%;">Current: 25.0</div>
<div style="position:absolute;left:989px;top:450px;width:17.3px;height:5px;background:#6ed0e0;border-radius:2.5px;"></div>
<div class="t" style="left:1023.24px;top:443.00px;font-size:15px;line-height:17px;color:#ccccdc;letter-spacing:0.000px;transform:scaleX(1.0668);transform-origin:0.96px 50%;">peak</div>
<div class="t" style="left:1074.07px;top:443.00px;font-size:15px;line-height:17px;color:#ccccdc;letter-spacing:0.000px;transform:scaleX(1.0864);transform-origin:1.23px 50%;">Max: 38.0</div>
<div class="t" style="left:1153.05px;top:443.00px;font-size:15px;line-height:17px;color:#ccccdc;letter-spacing:0.017px;transform:scaleX(1.0900);transform-origin:0.75px 50%;">Current: 38.0</div>
<svg style="position:absolute;left:0;top:0" width="1919" height="883" viewBox="0 0 1919 883"><path d="M1475.3 248.15 H1694 L1700.3 242.2 L1707 248.15 H1864.7 V343.1 H1475.3 Z" fill="#7eb26d" fill-opacity="0.115"/><rect x="1475.3" y="273.5" width="389.4000000000001" height="69.60000000000002" fill="#eab839" fill-opacity="0.115"/><rect x="1475.3" y="311.6" width="389.4000000000001" height="31.5" fill="#c15c17" fill-opacity="0.115"/><g stroke="#f0faff" stroke-opacity="0.15" stroke-width="1.25"><line x1="1475.3" x2="1869.4" y1="217.25" y2="217.25"/><line x1="1475.3" x2="1869.4" y1="248.65" y2="248.65"/><line x1="1475.3" x2="1869.4" y1="279.75" y2="279.75"/><line x1="1475.3" x2="1869.4" y1="311.85" y2="311.85"/><line x1="1475.3" x2="1869.4" y1="343.25" y2="343.25"/><line x1="1503.5" x2="1503.5" y1="216.90" y2="343.70"/><line x1="1635.5" x2="1635.5" y1="216.90" y2="343.70"/><line x1="1766.5" x2="1766.5" y1="216.90" y2="343.70"/></g><path d="M1475.3 248.15 H1694 L1700.3 242.2 L1707 248.15 H1864.7" fill="none" stroke="#7eb26d" stroke-width="1.25" stroke-linejoin="round"/><path d="M1475.3 273.5 H1864.7" stroke="#eab839" stroke-width="1.25"/><path d="M1475.3 311.6 H1864.7" stroke="#c15c17" stroke-width="1.25"/><path d="M1475.3 343.1 H1864.7" stroke="#98305f" stroke-width="1.25"/></svg>
<div class="t" style="left:1451.67px;top:207.00px;font-size:15px;line-height:17px;color:#ccccdc;letter-spacing:0.420px;will-change:transform;-webkit-text-stroke-width:0.3px;transform:scaleX(1.0900);transform-origin:16.53px 50%;">20</div>
<div class="t" style="left:1452.13px;top:239.00px;font-size:15px;line-height:17px;color:#ccccdc;letter-spacing:0.000px;will-change:transform;-webkit-text-stroke-width:0.3px;transform:scaleX(0.9715);transform-origin:16.07px 50%;">15</div>
<div class="t" style="left:1452.09px;top:271.00px;font-size:15px;line-height:17px;color:#ccccdc;letter-spacing:0.000px;will-change:transform;-webkit-text-stroke-width:0.3px;transform:scaleX(0.9820);transform-origin:16.11px 50%;">10</div>
<div class="t" style="left:1460.47px;top:302.00px;font-size:15px;line-height:17px;color:#ccccdc;letter-spacing:0.000px;will-change:transform;-webkit-text-stroke-width:0.3px;transform:scaleX(1.0900);transform-origin:7.72px 50%;">5</div>
<div class="t" style="left:1460.43px;top:334.00px;font-size:15px;line-height:17px;color:#ccccdc;letter-spacing:0.000px;will-change:transform;-webkit-text-stroke-width:0.3px;transform:scaleX(1.0900);transform-origin:7.77px 50%;">0</div>
<div class="t" style="left:1484.45px;top:352.00px;font-size:15px;line-height:17px;color:#ccccdc;letter-spacing:0.000px;will-change:transform;-webkit-text-stroke-width:0.3px;transform:scaleX(1.0385);transform-origin:19.05px 50%;">18:20</div>
<div class="t" style="left:1615.95px;top:352.00px;font-size:15px;line-height:17px;color:#ccccdc;letter-spacing:0.000px;will-change:transform;-webkit-text-stroke-width:0.3px;transform:scaleX(1.0385);transform-origin:19.05px 50%;">18:30</div>
<div class="t" style="left:1747.35px;top:352.00px;font-size:15px;line-height:17px;color:#ccccdc;letter-spacing:0.000px;will-change:transform;-webkit-text-stroke-width:0.3px;transform:scaleX(1.0385);transform-origin:19.05px 50%;">18:40</div>
<div style="position:absolute;left:1462px;top:393px;width:17.3px;height:5px;background:#bf1b00;border-radius:2.5px;"></div>
<div class="t" style="left:1496.24px;top:385.00px;font-size:15px;line-height:17px;color:#ccccdc;letter-spacing:0.189px;transform:scaleX(1.0900);transform-origin:0.96px 50%;">blocked</div>
<div class="t" style="left:1568.87px;top:385.00px;font-size:15px;line-height:17px;color:#ccccdc;letter-spacing:0.018px;transform:scaleX(1.0900);transform-origin:1.23px 50%;">Max: 0</div>
<div class="t" style="left:1625.05px;top:385.00px;font-size:15px;line-height:17px;color:#ccccdc;letter-spacing:0.025px;transform:scaleX(1.0900);transform-origin:0.75px 50%;">Current: 0</div>
<div style="position:absolute;left:1462px;top:419px;width:17.3px;height:5px;background:#fce2de;border-radius:2.5px;"></div>
<div class="t" style="left:1496.21px;top:411.00px;font-size:15px;line-height:17px;color:#ccccdc;letter-spacing:0.000px;transform:scaleX(1.0728);transform-origin:0.99px 50%;">new</div>
<div class="t" style="left:1541.87px;top:411.00px;font-size:15px;line-height:17px;color:#ccccdc;letter-spacing:0.018px;transform:scaleX(1.0900);transform-origin:1.23px 50%;">Max: 0</div>
<div class="t" style="left:1598.05px;top:411.00px;font-size:15px;line-height:17px;color:#ccccdc;letter-spacing:0.025px;transform:scaleX(1.0900);transform-origin:0.75px 50%;">Current: 0</div>
<div style="position:absolute;left:1462px;top:445px;width:17.3px;height:5px;background:#7eb26d;border-radius:2.5px;"></div>
<div class="t" style="left:1496.21px;top:437.00px;font-size:15px;line-height:17px;color:#ccccdc;letter-spacing:0.000px;transform:scaleX(1.0876);transform-origin:0.99px 50%;">runnable</div>
<div class="t" style="left:1575.07px;top:437.00px;font-size:15px;line-height:17px;color:#ccccdc;letter-spacing:0.000px;transform:scaleX(1.0431);transform-origin:1.23px 50%;">Max: 16</div>
<div class="t" style="left:1638.15px;top:437.00px;font-size:15px;line-height:17px;color:#ccccdc;letter-spacing:0.000px;transform:scaleX(1.0602);transform-origin:0.75px 50%;">Current: 15</div>
<div style="position:absolute;left:1880.5px;top:383px;width:9.5px;height:43px;background:#2f3136;border-radius:5px;"></div>
<svg style="position:absolute;left:159px;top:497.9px;" width="16.2" height="16.2" viewBox="0 0 16.2 16.2"><circle cx="8" cy="8" r="7.1" fill="none" stroke="#a1a2b0" stroke-width="1.7"/><path d="M8 7.5V11.4" stroke="#a1a2b0" stroke-width="1.7" stroke-linecap="round"/><circle cx="8" cy="4.8" r="1" fill="#a1a2b0"/></svg>
<svg style="position:absolute;left:0;top:0" width="1919" height="883" viewBox="0 0 1919 883"><g stroke="#f0faff" stroke-opacity="0.15" stroke-width="1.25"><line x1="89.7" x2="451.6" y1="549.35" y2="549.35"/><line x1="89.7" x2="451.6" y1="585.65" y2="585.65"/><line x1="89.7" x2="451.6" y1="622.85" y2="622.85"/><line x1="89.7" x2="451.6" y1="660.15" y2="660.15"/><line x1="89.7" x2="451.6" y1="697.45" y2="697.45"/><line x1="89.7" x2="451.6" y1="733.85" y2="733.85"/><line x1="114.5" x2="114.5" y1="548.60" y2="734.20"/><line x1="235.5" x2="235.5" y1="548.60" y2="734.20"/><line x1="355.5" x2="355.5" y1="548.60" y2="734.20"/></g><path d="M89.7 733.4 H449.4" stroke="#7eb26d" stroke-width="1.5"/></svg>
<div class="t" style="left:31.36px;top:539.00px;font-size:15px;line-height:17px;color:#ccccdc;letter-spacing:0.000px;will-change:transform;-webkit-text-stroke-width:0.3px;transform:scaleX(0.9837);transform-origin:50.34px 50%;">100.0%</div>
<div class="t" style="left:39.70px;top:576.00px;font-size:15px;line-height:17px;color:#ccccdc;letter-spacing:0.000px;will-change:transform;-webkit-text-stroke-width:0.3px;transform:scaleX(0.9817);transform-origin:42.00px 50%;">80.0%</div>
<div class="t" style="left:39.70px;top:613.00px;font-size:15px;line-height:17px;color:#ccccdc;letter-spacing:0.000px;will-change:transform;-webkit-text-stroke-width:0.3px;transform:scaleX(0.9842);transform-origin:42.00px 50%;">60.0%</div>
<div class="t" style="left:39.70px;top:649.00px;font-size:15px;line-height:17px;color:#ccccdc;letter-spacing:0.000px;will-change:transform;-webkit-text-stroke-width:0.3px;transform:scaleX(1.0079);transform-origin:42.00px 50%;">40.0%</div>
<div class="t" style="left:39.70px;top:687.00px;font-size:15px;line-height:17px;color:#ccccdc;letter-spacing:0.000px;will-change:transform;-webkit-text-stroke-width:0.3px;transform:scaleX(0.9842);transform-origin:42.00px 50%;">20.0%</div>
<div class="t" style="left:48.04px;top:723.00px;font-size:15px;line-height:17px;color:#ccccdc;letter-spacing:0.000px;will-change:transform;-webkit-text-stroke-width:0.3px;transform:scaleX(0.9615);transform-origin:33.66px 50%;">0.0%</div>
<div class="t" style="left:95.15px;top:742.00px;font-size:15px;line-height:17px;color:#ccccdc;letter-spacing:0.000px;will-change:transform;-webkit-text-stroke-width:0.3px;transform:scaleX(1.0385);transform-origin:19.05px 50%;">18:20</div>
<div class="t" style="left:215.95px;top:742.00px;font-size:15px;line-height:17px;color:#ccccdc;letter-spacing:0.000px;will-change:transform;-webkit-text-stroke-width:0.3px;transform:scaleX(1.0385);transform-origin:19.05px 50%;">18:30</div>
<div class="t" style="left:336.65px;top:742.00px;font-size:15px;line-height:17px;color:#ccccdc;letter-spacing:0.000px;will-change:transform;-webkit-text-stroke-width:0.3px;transform:scaleX(1.0385);transform-origin:19.05px 50%;">18:40</div>
<div style="position:absolute;left:44px;top:782px;width:17.3px;height:5px;background:#7eb26d;border-radius:2.5px;"></div>
<div class="t" style="left:78.15px;top:775.00px;font-size:15px;line-height:17px;color:#ccccdc;letter-spacing:0.000px;transform:scaleX(1.0658);transform-origin:0.75px 50%;">CPU time spent on GC</div>
<div class="t" style="left:255.67px;top:775.00px;font-size:15px;line-height:17px;color:#ccccdc;letter-spacing:0.000px;transform:scaleX(1.0562);transform-origin:1.23px 50%;">Max: 0.00%</div>
<div class="t" style="left:346.85px;top:775.00px;font-size:15px;line-height:17px;color:#ccccdc;letter-spacing:0.000px;transform:scaleX(1.0683);transform-origin:0.75px 50%;">Current: 0.00%</div>
<svg style="position:absolute;left:0;top:0" width="1919" height="883" viewBox="0 0 1919 883"><rect x="589" y="570.2" width="794" height="111.39999999999998" fill="#1f78c1" fill-opacity="0.115"/><g stroke="#f0faff" stroke-opacity="0.15" stroke-width="1.25"><line x1="589" x2="1396.2" y1="549.55" y2="549.55"/><line x1="589" x2="1396.2" y1="575.75" y2="575.75"/><line x1="589" x2="1396.2" y1="602.25" y2="602.25"/><line x1="589" x2="1396.2" y1="628.45" y2="628.45"/><line x1="589" x2="1396.2" y1="654.95" y2="654.95"/><line x1="589" x2="1396.2" y1="681.85" y2="681.85"/><line x1="643.5" x2="643.5" y1="548.90" y2="682.20"/><line x1="778.5" x2="778.5" y1="548.90" y2="682.20"/><line x1="912.5" x2="912.5" y1="548.90" y2="682.20"/><line x1="1047.5" x2="1047.5" y1="548.90" y2="682.20"/><line x1="1181.5" x2="1181.5" y1="548.90" y2="682.20"/><line x1="1316.5" x2="1316.5" y1="548.90" y2="682.20"/></g><path d="M589 570.2 H1383" stroke="#1f78c1" stroke-width="1.25"/><path d="M589 681.6 H1383" stroke="#eab839" stroke-width="1.5"/></svg>
<div class="t" style="left:511.74px;top:539.00px;font-size:15px;line-height:17px;color:#ccccdc;letter-spacing:0.000px;will-change:transform;-webkit-text-stroke-width:0.3px;transform:scaleX(1.0882);transform-origin:69.06px 50%;">500 ops/m</div>
<div class="t" style="left:511.74px;top:566.00px;font-size:15px;line-height:17px;color:#ccccdc;letter-spacing:0.000px;will-change:transform;-webkit-text-stroke-width:0.3px;transform:scaleX(1.0840);transform-origin:69.06px 50%;">400 ops/m</div>
<div class="t" style="left:511.74px;top:592.00px;font-size:15px;line-height:17px;color:#ccccdc;letter-spacing:0.000px;will-change:transform;-webkit-text-stroke-width:0.3px;transform:scaleX(1.0878);transform-origin:69.06px 50%;">300 ops/m</div>
<div class="t" style="left:511.70px;top:618.00px;font-size:15px;line-height:17px;color:#ccccdc;letter-spacing:0.005px;will-change:transform;-webkit-text-stroke-width:0.3px;transform:scaleX(1.0900);transform-origin:69.10px 50%;">200 ops/m</div>
<div class="t" style="left:511.74px;top:646.00px;font-size:15px;line-height:17px;color:#ccccdc;letter-spacing:0.000px;will-change:transform;-webkit-text-stroke-width:0.3px;transform:scaleX(1.0645);transform-origin:69.06px 50%;">100 ops/m</div>
<div class="t" style="left:528.42px;top:672.00px;font-size:15px;line-height:17px;color:#ccccdc;letter-spacing:0.000px;will-change:transform;-webkit-text-stroke-width:0.3px;transform:scaleX(1.0850);transform-origin:52.38px 50%;">0 ops/m</div>
<div class="t" style="left:624.35px;top:691.00px;font-size:15px;line-height:17px;color:#ccccdc;letter-spacing:0.000px;will-change:transform;-webkit-text-stroke-width:0.3px;transform:scaleX(1.0385);transform-origin:19.05px 50%;">18:20</div>
<div class="t" style="left:758.87px;top:691.00px;font-size:15px;line-height:17px;color:#ccccdc;letter-spacing:0.000px;will-change:transform;-webkit-text-stroke-width:0.3px;transform:scaleX(1.0398);transform-origin:19.03px 50%;">18:25</div>
<div class="t" style="left:893.35px;top:691.00px;font-size:15px;line-height:17px;color:#ccccdc;letter-spacing:0.000px;will-change:transform;-webkit-text-stroke-width:0.3px;transform:scaleX(1.0385);transform-origin:19.05px 50%;">18:30</div>
<div class="t" style="left:1027.87px;top:691.00px;font-size:15px;line-height:17px;color:#ccccdc;letter-spacing:0.000px;will-change:transform;-webkit-text-stroke-width:0.3px;transform:scaleX(1.0398);transform-origin:19.03px 50%;">18:35</div>
<div class="t" style="left:1162.35px;top:691.00px;font-size:15px;line-height:17px;color:#ccccdc;letter-spacing:0.000px;will-change:transform;-webkit-text-stroke-width:0.3px;transform:scaleX(1.0385);transform-origin:19.05px 50%;">18:40</div>
<div class="t" style="left:1296.87px;top:691.00px;font-size:15px;line-height:17px;color:#ccccdc;letter-spacing:0.000px;will-change:transform;-webkit-text-stroke-width:0.3px;transform:scaleX(1.0398);transform-origin:19.03px 50%;">18:45</div>
<div style="position:absolute;left:517px;top:730px;width:17.3px;height:5px;background:#1f78c1;border-radius:2.5px;"></div>
<div class="t" style="left:551.47px;top:723.00px;font-size:15px;line-height:17px;color:#ccccdc;letter-spacing:0.244px;transform:scaleX(1.0900);transform-origin:0.63px 50%;">debug</div>
<div class="t" style="left:612.57px;top:723.00px;font-size:15px;line-height:17px;color:#ccccdc;letter-spacing:0.000px;transform:scaleX(1.0759);transform-origin:1.23px 50%;">Max: 420.1 ops/m</div>
<div class="t" style="left:747.05px;top:723.00px;font-size:15px;line-height:17px;color:#ccccdc;letter-spacing:0.077px;transform:scaleX(1.0900);transform-origin:0.75px 50%;">Current: 420.0 ops/m</div>
<div style="position:absolute;left:915px;top:730px;width:17.3px;height:5px;background:#bf1b00;border-radius:2.5px;"></div>
<div class="t" style="left:949.77px;top:723.00px;font-size:15px;line-height:17px;color:#ccccdc;letter-spacing:0.008px;transform:scaleX(1.0900);transform-origin:0.63px 50%;">error</div>
<div class="t" style="left:1000.27px;top:723.00px;font-size:15px;line-height:17px;color:#ccccdc;letter-spacing:0.000px;transform:scaleX(1.0654);transform-origin:1.23px 50%;">Max: 1.0 ops/m</div>
<div class="t" style="left:1116.45px;top:723.00px;font-size:15px;line-height:17px;color:#ccccdc;letter-spacing:0.026px;transform:scaleX(1.0900);transform-origin:0.75px 50%;">Current: 0.0 ops/m</div>
<div style="position:absolute;left:517px;top:756px;width:17.3px;height:5px;background:#508642;border-radius:2.5px;"></div>
<div class="t" style="left:551.11px;top:749.00px;font-size:15px;line-height:17px;color:#ccccdc;letter-spacing:0.395px;transform:scaleX(1.0900);transform-origin:0.99px 50%;">info</div>
<div class="t" style="left:593.77px;top:749.00px;font-size:15px;line-height:17px;color:#ccccdc;letter-spacing:0.024px;transform:scaleX(1.0900);transform-origin:1.23px 50%;">Max: 0.0 ops/m</div>
<div class="t" style="left:712.45px;top:749.00px;font-size:15px;line-height:17px;color:#ccccdc;letter-spacing:0.064px;transform:scaleX(1.0900);transform-origin:0.75px 50%;">Current: 0.0 ops/m</div>
<div style="position:absolute;left:860.8px;top:756px;width:17.3px;height:5px;background:#6ed0e0;border-radius:2.5px;"></div>
<div class="t" style="left:896.47px;top:749.00px;font-size:15px;line-height:17px;color:#ccccdc;letter-spacing:0.142px;transform:scaleX(1.0900);transform-origin:0.23px 50%;">trace</div>
<div class="t" style="left:948.57px;top:749.00px;font-size:15px;line-height:17px;color:#ccccdc;letter-spacing:0.024px;transform:scaleX(1.0900);transform-origin:1.23px 50%;">Max: 0.0 ops/m</div>
<div class="t" style="left:1067.45px;top:749.00px;font-size:15px;line-height:17px;color:#ccccdc;letter-spacing:0.032px;transform:scaleX(1.0900);transform-origin:0.75px 50%;">Current: 0.0 ops/m</div>
<div style="position:absolute;left:517px;top:782px;width:17.3px;height:5px;background:#eab839;border-radius:2.5px;"></div>
<div class="t" style="left:552.10px;top:775.00px;font-size:15px;line-height:17px;color:#ccccdc;letter-spacing:0.000px;transform:scaleX(1.0895);transform-origin:0.00px 50%;">warn</div>
<div class="t" style="left:602.37px;top:775.00px;font-size:15px;line-height:17px;color:#ccccdc;letter-spacing:0.045px;transform:scaleX(1.0900);transform-origin:1.23px 50%;">Max: 0.0 ops/m</div>
<div class="t" style="left:721.45px;top:775.00px;font-size:15px;line-height:17px;color:#ccccdc;letter-spacing:0.042px;transform:scaleX(1.0900);transform-origin:0.75px 50%;">Current: 0.0 ops/m</div>
<div style="position:absolute;left:1397px;top:485.4px;width:30px;height:40.5px;background:#34363c;border-radius:2.5px;"></div>
<div style="position:absolute;left:1410.35px;top:498.65000000000003px;width:3.3px;height:3.3px;background:#b9bac9;border-radius:50%;"></div>
<div style="position:absolute;left:1410.35px;top:504.40000000000003px;width:3.3px;height:3.3px;background:#b9bac9;border-radius:50%;"></div>
<div style="position:absolute;left:1410.35px;top:510.15000000000003px;width:3.3px;height:3.3px;background:#b9bac9;border-radius:50%;"></div>
<div style="position:absolute;left:1422px;top:798px;width:2px;height:6px;background:#6a6a6a;"></div>
<div style="position:absolute;left:1418px;top:802px;width:4px;height:2px;background:#6a6a6a;"></div>
<svg style="position:absolute;left:0;top:0" width="1919" height="883" viewBox="0 0 1919 883"><g stroke="#f0faff" stroke-opacity="0.15" stroke-width="1.25"><line x1="1483" x2="1869.8" y1="549.15" y2="549.15"/><line x1="1483" x2="1869.8" y1="619.15" y2="619.15"/><line x1="1483" x2="1869.8" y1="689.15" y2="689.15"/><line x1="1483" x2="1869.8" y1="758.95" y2="758.95"/><line x1="1508.5" x2="1508.5" y1="548.60" y2="759.40"/><line x1="1637.5" x2="1637.5" y1="548.60" y2="759.40"/><line x1="1767.5" x2="1767.5" y1="548.60" y2="759.40"/></g></svg>
<div class="t" style="left:1450.45px;top:539.00px;font-size:15px;line-height:17px;color:#ccccdc;letter-spacing:-0.000px;will-change:transform;-webkit-text-stroke-width:0.3px;transform:scaleX(1.0167);transform-origin:24.45px 50%;">100</div>
<div class="t" style="left:1458.79px;top:609.00px;font-size:15px;line-height:17px;color:#ccccdc;letter-spacing:0.000px;will-change:transform;-webkit-text-stroke-width:0.3px;transform:scaleX(1.0488);transform-origin:16.11px 50%;">10</div>
<div class="t" style="left:1467.28px;top:679.00px;font-size:15px;line-height:17px;color:#ccccdc;letter-spacing:0.000px;will-change:transform;-webkit-text-stroke-width:0.3px;transform:scaleX(0.9105);transform-origin:7.62px 50%;">1</div>
<div class="t" style="left:1467.13px;top:749.00px;font-size:15px;line-height:17px;color:#ccccdc;letter-spacing:0.000px;will-change:transform;-webkit-text-stroke-width:0.3px;transform:scaleX(1.0856);transform-origin:7.77px 50%;">0</div>
<div class="t" style="left:1489.55px;top:768.00px;font-size:15px;line-height:17px;color:#ccccdc;letter-spacing:0.000px;will-change:transform;-webkit-text-stroke-width:0.3px;transform:scaleX(1.0385);transform-origin:19.05px 50%;">18:20</div>
<div class="t" style="left:1618.65px;top:768.00px;font-size:15px;line-height:17px;color:#ccccdc;letter-spacing:0.000px;will-change:transform;-webkit-text-stroke-width:0.3px;transform:scaleX(1.0385);transform-origin:19.05px 50%;">18:30</div>
<div class="t" style="left:1747.75px;top:768.00px;font-size:15px;line-height:17px;color:#ccccdc;letter-spacing:0.000px;will-change:transform;-webkit-text-stroke-width:0.3px;transform:scaleX(1.0385);transform-origin:19.05px 50%;">18:40</div>
<div class="t" style="left:1635.57px;top:617.40px;font-size:17.5px;line-height:20px;color:#ccccdc;letter-spacing:0.022px;transform:scaleX(1.0900);transform-origin:1.44px 50%;">No data</div>
<div style="position:absolute;left:1910.3px;top:553px;width:10px;height:102px;background:#2f3136;border-radius:5px;"></div>
</body></html>
